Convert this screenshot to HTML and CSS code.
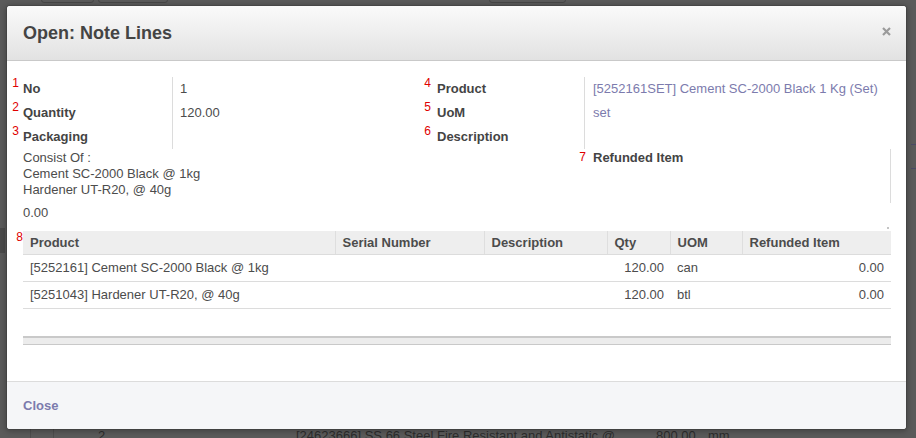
FILE: index.html
```html
<!DOCTYPE html>
<html>
<head>
<meta charset="utf-8">
<title>Open: Note Lines</title>
<link rel="stylesheet" href="styles.css">
</head>
<body>
<div class="under" aria-hidden="true">
  <span class="u-btn u-btn1"></span>
  <span class="u-btn u-btn2"></span>
  <span class="u-btn u-btn3"></span>
  <span class="u-side"></span>
  <span class="u-vline u-v1"></span>
  <span class="u-vline u-v2"></span>
  <span class="u-text u-num">2</span>
  <span class="u-text u-t1">[24623666] SS 66 Steel Fire Resistant and Antistatic @</span>
  <span class="u-text u-t2">800.00</span>
  <span class="u-text u-t3">mm</span>
  <span class="u-hline u-h1"></span>
  <span class="u-hline u-h2"></span>
</div>

<div class="modal">
  <div class="modal-header">
    <h1 class="modal-title">Open: Note Lines</h1>
    <svg class="close" width="9" height="9" viewBox="0 0 9 9"><path d="M1 1 L8 8 M8 1 L1 8" stroke="#9b9b9b" stroke-width="2.2" fill="none"/></svg>
  </div>

  <div class="modal-body">
    <div class="form-top">
      <div class="lbl-cell"><span class="lbl"><i class="ann">1</i>No</span></div>
      <div class="val-cell">1</div>
      <div class="lbl-cell lbl-right"><span class="lbl"><i class="ann ann-wide">4</i>Product</span></div>
      <div class="val-cell val-right link">[5252161SET] Cement SC-2000 Black 1 Kg (Set)</div>

      <div class="lbl-cell"><span class="lbl"><i class="ann">2</i>Quantity</span></div>
      <div class="val-cell">120.00</div>
      <div class="lbl-cell lbl-right"><span class="lbl"><i class="ann ann-wide">5</i>UoM</span></div>
      <div class="val-cell val-right link">set</div>

      <div class="lbl-cell"><span class="lbl"><i class="ann">3</i>Packaging</span></div>
      <div class="val-cell"></div>
      <div class="lbl-cell lbl-right"><span class="lbl"><i class="ann ann-wide">6</i>Description</span></div>
      <div class="val-cell val-right"></div>
    </div>

    <div class="form-mid">
      <div class="notes">Consist Of :<br>Cement SC-2000 Black @ 1kg<br>Hardener UT-R20, @ 40g</div>
      <div class="refund-cell"><span class="lbl"><i class="ann ann-level">7</i>Refunded Item</span></div>
    </div>
    <div class="refund-val">0.00</div>
    <div class="spacer"><span class="dot"></span></div>

    <table class="lines">
      <colgroup>
        <col class="c-prod">
        <col class="c-serial">
        <col class="c-desc">
        <col class="c-qty">
        <col class="c-uom">
        <col class="c-ref">
      </colgroup>
      <thead>
        <tr>
          <th><span class="lbl"><i class="ann ann-table">8</i>Product</span></th>
          <th>Serial Number</th>
          <th>Description</th>
          <th>Qty</th>
          <th>UOM</th>
          <th>Refunded Item</th>
        </tr>
      </thead>
      <tbody>
        <tr>
          <td>[5252161] Cement SC-2000 Black @ 1kg</td>
          <td></td>
          <td></td>
          <td class="num num-qty">120.00</td>
          <td>can</td>
          <td class="num">0.00</td>
        </tr>
        <tr>
          <td>[5251043] Hardener UT-R20, @ 40g</td>
          <td></td>
          <td></td>
          <td class="num num-qty">120.00</td>
          <td>btl</td>
          <td class="num">0.00</td>
        </tr>
      </tbody>
    </table>
    <div class="list-foot"></div>
  </div>

  <div class="modal-footer">
    <a class="btn-close" href="#">Close</a>
  </div>
</div>
</body>
</html>
```

FILE: styles.css
```css
html, body {
  margin: 0;
  padding: 0;
}

body {
  width: 916px;
  height: 438px;
  overflow: hidden;
  background: #5a5a5a;
  font-family: "Liberation Sans", Arial, sans-serif;
  font-size: 13px;
  color: #4c4c4c;
  position: relative;
}

/* ---------- dimmed page underneath the dialog ---------- */
.under {
  position: absolute;
  inset: 0;
  z-index: 0;
}

.u-btn {
  position: absolute;
  top: -18px;
  height: 19px;
  border: 1px solid #474747;
  border-radius: 3px;
}
.u-btn1 { left: 41px; width: 51px; }
.u-btn2 { left: 98px; width: 68px; }
.u-btn3 { left: 489px; width: 75px; }

.u-side {
  position: absolute;
  left: 0;
  top: 228px;
  width: 5px;
  height: 25px;
  background: #4a4a4a;
}

.u-vline {
  position: absolute;
  top: 428px;
  width: 1px;
  height: 12px;
  background: #4d4d4d;
}
.u-v1 { left: 30px; }
.u-v2 { left: 53px; }

.u-text {
  position: absolute;
  top: 428px;
  line-height: 15px;
  color: #2c2c2c;
  font-size: 13px;
  white-space: nowrap;
}
.u-num { left: 98px; }
.u-t1 { left: 296px; }
.u-t2 { left: 656px; }
.u-t3 { left: 708px; }

.u-hline {
  position: absolute;
  left: 911px;
  width: 5px;
  height: 1px;
  background: #4a4a66;
}
.u-h1 { top: 144px; }
.u-h2 { top: 168px; }

/* ---------- dialog ---------- */
.modal {
  position: relative;
  z-index: 1;
  width: 899px;
  height: 423px;
  margin: 6px 0 0 7px;
  background: #fff;
  border-radius: 3px;
  box-shadow: 0 0 0 1px rgba(0, 0, 0, 0.1), 0 1px 5px 2px rgba(0, 0, 0, 0.22);
  display: flex;
  flex-direction: column;
  overflow: hidden;
}

.modal-header {
  height: 54px;
  padding: 0 15px 0 16px;
  box-sizing: content-box;
  display: flex;
  align-items: center;
  justify-content: space-between;
  background: linear-gradient(#fafafa, #e2e2e2);
  border-bottom: 1px solid #c9c9c9;
  flex: none;
}

.modal-title {
  margin: 0;
  font-size: 18px;
  line-height: 22px;
  font-weight: bold;
  color: #444;
}

.close {
  display: block;
  margin-bottom: 3px;
}

.modal-body {
  flex: 1;
  padding: 16px 15px 0 16px;
}

/* annotation numbers */
.lbl {
  position: relative;
}

.ann {
  position: absolute;
  right: calc(100% + 4px);
  top: -4px;
  font-style: normal;
  font-weight: normal;
  font-size: 12px;
  line-height: 12px;
  color: #e00000;
}
.ann-wide { right: calc(100% + 6px); }
.ann-level { right: calc(100% + 7px); top: 1px; }
.ann-table { right: calc(100% + 7px); }

/* top form grid */
.form-top {
  display: grid;
  grid-template-columns: 150px 264px 148px 1fr;
  grid-auto-rows: 24px;
  line-height: 24px;
}

.lbl-cell {
  font-weight: bold;
  color: #444;
  border-right: 1px solid #dcdcdc;
  white-space: nowrap;
}

.val-cell {
  padding-left: 7px;
  color: #4c4c4c;
  white-space: nowrap;
}

.val-right {
  padding-left: 8px;
}

.link {
  color: #7c7bad;
}

/* middle block */
.form-mid {
  display: grid;
  grid-template-columns: 562px 1fr;
  line-height: 16px;
}

.notes {
  padding: 1px 0 5px;
}

.refund-cell {
  padding: 1px 0 5px 8px;
  border-right: 1px solid #dcdcdc;
  font-weight: bold;
  color: #444;
}

.refund-val {
  padding-top: 2px;
  line-height: 16px;
}

.spacer {
  height: 10px;
  display: flex;
  justify-content: flex-end;
  align-items: flex-start;
  padding-right: 2px;
  box-sizing: border-box;
}

.dot {
  width: 2px;
  height: 2px;
  margin-top: 6px;
  background: #c4c4c4;
}

/* list */
.lines {
  width: 868px;
  table-layout: fixed;
  border-collapse: collapse;
  line-height: 15px;
}

.c-prod { width: 312px; }
.c-serial { width: 149px; }
.c-desc { width: 123px; }
.c-qty { width: 63px; }
.c-uom { width: 72px; }
.c-ref { width: 149px; }

.lines th {
  background: #eeeeee;
  font-weight: bold;
  color: #4c4c4c;
  text-align: left;
  padding: 4px 7px;
  border-left: 1px solid #dedede;
  border-bottom: 1px solid #dcdcdc;
  white-space: nowrap;
}
.lines th:first-child { border-left: none; }

.lines td {
  padding: 5px 7px 6px;
  border-bottom: 1px solid #dcdcdc;
  color: #4c4c4c;
  white-space: nowrap;
}

.lines td.num {
  text-align: right;
}
.lines td.num-qty {
  padding-right: 6px;
}

.list-foot {
  margin-top: 27px;
  height: 6px;
  background: #ececec;
  border-top: 2px solid #c9c9c9;
  border-bottom: 1px solid #c9c9c9;
}

/* footer */
.modal-footer {
  flex: none;
  height: 31px;
  padding: 16px 16px 0;
  background: #f5f6f8;
  border-top: 1px solid #dcdcdc;
  line-height: 15px;
}

.btn-close {
  font-weight: bold;
  color: #7c7bad;
  text-decoration: none;
}
```
